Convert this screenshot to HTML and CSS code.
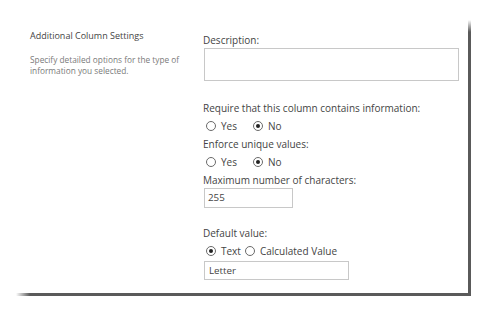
FILE: index.html
```html
<!DOCTYPE html>
<html lang="en">
<head>
    <meta charset="UTF-8">
    <title>Additional Column Settings</title>
    <link rel="stylesheet" href="styles.css">
</head>
<body>
    <div class="panel">
        <!-- Section description -->
        <div class="settings-info">
            <h3>Additional Column Settings</h3>
            <p>Specify detailed options for the type of information you selected.</p>
        </div>

        <!-- Field settings -->
        <div class="settings-fields">
            <div class="label">Description:</div>
            <div class="textbox textbox-area"></div>

            <div class="label label-gap">Require that this column contains information:</div>
            <div class="radio-row">
                <span class="radio"></span><span class="radio-text">Yes</span>
                <span class="radio checked"></span><span class="radio-text">No</span>
            </div>

            <div class="label">Enforce unique values:</div>
            <div class="radio-row">
                <span class="radio"></span><span class="radio-text">Yes</span>
                <span class="radio checked"></span><span class="radio-text">No</span>
            </div>

            <div class="label">Maximum number of characters:</div>
            <div class="textbox textbox-short">255</div>

            <div class="label label-gap-small">Default value:</div>
            <div class="radio-row">
                <span class="radio checked"></span><span class="radio-text tight">Text</span>
                <span class="radio"></span><span class="radio-text">Calculated Value</span>
            </div>
            <div class="textbox textbox-medium">Letter</div>
        </div>
    </div>
</body>
</html>
```

FILE: styles.css
```css
/* Global */
* {
    margin: 0;
    padding: 0;
    box-sizing: border-box;
}

body {
    background-color: #fff;
    font-family: "Open Sans", "Noto Sans", Arial, sans-serif;
    color: #444;
}

/* Panel with the dark drop edge on right and bottom */
.panel {
    display: flex;
    margin: 20px 0 0 16px;
    width: 455px;
    height: 276px;
    padding: 8px 3px 3px 14px;
    background:
        linear-gradient(to bottom, rgba(90, 90, 90, 0), #5a5a5a 12px) right top / 3px 100% no-repeat,
        linear-gradient(to right, rgba(90, 90, 90, 0), #5a5a5a 14px) left bottom / 100% 3px no-repeat,
        #fff;
}

/* Left column */
.settings-info {
    width: 173px;
    flex-shrink: 0;
}

.settings-info h3 {
    font-size: 9px;
    font-weight: normal;
    line-height: 16px;
    color: #444;
    margin-bottom: 10px;
}

.settings-info p {
    font-size: 8.3px;
    line-height: 11px;
    color: #7a7a7a;
    width: 160px;
}

/* Right column */
.settings-fields {
    padding-top: 4px;
    flex: 1;
}

.label {
    font-size: 10px;
    line-height: 16px;
    color: #444;
}

.label-gap {
    margin-top: 19px;
}

.label-gap-small {
    margin-top: 17px;
}

.textbox {
    border: 1px solid #c8c8c8;
    margin-left: 1px;
    font-size: 9.8px;
    color: #444;
    padding-left: 3px;
}

.textbox-area {
    width: 255px;
    height: 33px;
}

.textbox-short {
    width: 89px;
    height: 20px;
    line-height: 18px;
}

.textbox-medium {
    width: 145px;
    height: 19px;
    line-height: 17px;
    padding-left: 4px;
}

/* Radio buttons */
.radio-row {
    display: flex;
    align-items: center;
    height: 20px;
    padding-left: 3px;
    font-size: 10px;
    color: #444;
}

.radio {
    width: 10px;
    height: 10px;
    border: 1px solid #6a6a6a;
    border-radius: 50%;
    display: flex;
    align-items: center;
    justify-content: center;
    margin-right: 5px;
}

.radio.checked::after {
    content: "";
    width: 4px;
    height: 4px;
    border-radius: 50%;
    background-color: #222;
}

.radio-text {
    margin-right: 16px;
}

.radio-text.tight {
    margin-right: 4px;
}
```
